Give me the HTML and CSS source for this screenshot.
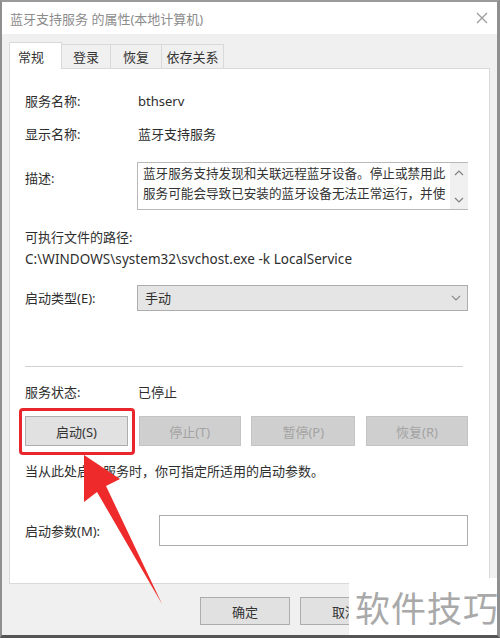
FILE: index.html
```html
<!DOCTYPE html>
<html lang="zh-CN">
<head>
<meta charset="utf-8">
<title>蓝牙支持服务 的属性</title>
<link rel="stylesheet" href="styles.css">
</head>
<body>
<div class="window">
  <div class="titlebar">
    <span class="title">蓝牙支持服务 的属性(本地计算机)</span>
    <svg class="close" width="12" height="12" viewBox="0 0 12 12"><path d="M1 1L11 11M11 1L1 11" stroke="#9a9a9a" stroke-width="1.2" fill="none"/></svg>
  </div>
  <div class="body">
    <div class="tabs">
      <div class="tab active t1">常规</div>
      <div class="tab t2">登录</div>
      <div class="tab t3">恢复</div>
      <div class="tab t4">依存关系</div>
    </div>
    <div class="panel">
      <div class="row r-name"><span class="label">服务名称:</span><span class="value">bthserv</span></div>
      <div class="row r-disp"><span class="label">显示名称:</span><span class="value">蓝牙支持服务</span></div>
      <div class="row r-desc">
        <span class="label desc-label">描述:</span>
        <div class="descbox">
          <div class="desctext">蓝牙服务支持发现和关联远程蓝牙设备。停止或禁用此<br>服务可能会导致已安装的蓝牙设备无法正常运行，并使</div>
          <div class="scroll">
            <svg width="10" height="8" viewBox="0 0 10 8"><path d="M1 6L5 2L9 6" stroke="#808080" stroke-width="1.2" fill="none"/></svg>
            <svg width="10" height="8" viewBox="0 0 10 8"><path d="M1 2L5 6L9 2" stroke="#808080" stroke-width="1.2" fill="none"/></svg>
          </div>
        </div>
      </div>
      <div class="row r-exe"><span class="label">可执行文件的路径:</span></div>
      <div class="row r-path"><span class="path">C:\WINDOWS\system32\svchost.exe -k LocalService</span></div>
      <div class="row r-type">
        <span class="label">启动类型(E):</span>
        <div class="select"><span>手动</span>
          <svg width="10" height="8" viewBox="0 0 10 8"><path d="M1 2L5 6L9 2" stroke="#8a8a8a" stroke-width="1.1" fill="none"/></svg>
        </div>
      </div>
      <div class="sep"></div>
      <div class="row r-status"><span class="label">服务状态:</span><span class="value">已停止</span></div>
      <div class="btnrow">
        <div class="btnwrap"><div class="btn">启动(S)</div><div class="highlight"></div></div>
        <div class="btn disabled">停止(T)</div>
        <div class="btn disabled w104">暂停(P)</div>
        <div class="btn disabled">恢复(R)</div>
      </div>
      <div class="row r-hint"><span class="cjk">当从此处启动服务时，你可指定所适用的启动参数。</span></div>
      <div class="row r-param"><span class="label">启动参数(M):</span><div class="input"></div></div>
    </div>
    <div class="footer">
      <div class="fbtn">确定</div>
      <div class="fbtn cancel">取消</div>
      <div class="fbtn">应用(A)</div>
    </div>
  </div>
  <svg class="arrow" width="500" height="638" viewBox="0 0 500 638">
    <polygon points="84,455 120,479 106,486 162,604 97,492 84,502" fill="#ee2a2a"/>
  </svg>
  <div class="watermark">软件技巧</div>
</div>
</body>
</html>
```

FILE: styles.css
```css
* { box-sizing: border-box; }
html, body { margin: 0; padding: 0; background: #ffffff; }
body {
  font-family: "Noto Sans", "Noto Sans CJK SC", sans-serif;
  font-size: 13px;
  color: #2e2e2e;
}
.cjk { font-family: "Noto Sans CJK SC", sans-serif; }
.window {
  position: relative;
  width: 500px;
  height: 638px;
  border-left: 2px solid #8f8f8f;
  border-right: 3px solid #8f8f8f;
  border-top: 2px solid #9a9a9a;
  border-bottom: 3px solid #555555;
  background: #f0f0f0;
  display: flex;
  flex-direction: column;
  overflow: hidden;
}
.titlebar {
  height: 32px;
  background: #ffffff;
  display: flex;
  align-items: center;
  justify-content: space-between;
  padding: 0 9px 0 8px;
  flex-shrink: 0;
}
.title { color: #8c8c8c; font-size: 13px; }
.close { display: block; }
.body {
  flex: 1;
  padding: 8px 7px 0 7px;
  display: flex;
  flex-direction: column;
}
.tabs {
  display: flex;
  align-items: flex-end;
  height: 26px;
  position: relative;
  z-index: 2;
}
.tab {
  height: 24px;
  border: 1px solid #d9d9d9;
  border-bottom: none;
  border-left: none;
  background: #f0f0f0;
  display: flex;
  align-items: center;
  justify-content: center;
  font-size: 13px;
  color: #333;
}
.tab.active {
  height: 27px;
  background: #ffffff;
  border-left: 1px solid #d9d9d9;
  margin-bottom: -1px;
  justify-content: flex-start;
  padding-left: 8px;
}
.t1 { width: 53px; }
.t2 { width: 49px; }
.t3 { width: 51px; }
.t4 { width: 62px; }
.panel {
  height: 516px;
  background: #ffffff;
  border: 1px solid #d9d9d9;
  padding: 22px 21px 0 15px;
  display: flex;
  flex-direction: column;
  position: relative;
  z-index: 1;
}
.row {
  display: flex;
  align-items: center;
  min-height: 20px;
  line-height: 20px;
}
.label { width: 113px; flex-shrink: 0; }
.r-disp { margin-top: 13px; }
.r-desc { margin-top: 18px; align-items: flex-start; }
.desc-label { margin-top: 6px; }
.descbox {
  flex: 1;
  height: 48px;
  border: 1px solid #b9b9b9;
  border-right: none;
  display: flex;
  margin-left: -1px;
}
.desctext {
  flex: 1;
  padding: 0 0 0 5px;
  line-height: 20px;
  font-size: 12.6px;
  white-space: nowrap;
  overflow: hidden;
  color: #333;
  font-family: "Noto Sans CJK SC", sans-serif;
}
.scroll {
  width: 18px;
  background: #f0f0f0;
  display: flex;
  flex-direction: column;
  justify-content: space-between;
  align-items: center;
  padding: 6px 0 5px;
}
.scroll svg { display: block; }
.r-exe { margin-top: 17px; }
.r-path { margin-top: 2px; }
.path { font-size: 13.5px; letter-spacing: 0.05px; }
.r-type { margin-top: 16px; }
.select {
  flex: 1;
  height: 26px;
  margin-left: -1px;
  background: #e5e5e5;
  border: 1px solid #adadad;
  display: flex;
  align-items: center;
  justify-content: space-between;
  padding: 0 6px 0 7px;
}
.select svg { display: block; }
.sep {
  margin-top: 55px;
  height: 1px;
  background: #d0d0d0;
  margin-right: 5px;
}
.r-status { margin-top: 15px; }
.btnrow {
  margin-top: 14px;
  display: flex;
  justify-content: space-between;
}
.btnwrap { position: relative; }
.btn {
  width: 102px;
  height: 30px;
  background: #e1e1e1;
  border: 1px solid #adadad;
  display: flex;
  align-items: center;
  justify-content: center;
  font-size: 13px;
  color: #333;
}
.btnwrap .btn { width: 103px; }
.btn.w104 { width: 104px; }
.btn.disabled {
  background: #cfcfcf;
  border-color: #c4c4c4;
  color: #a3a3a3;
}
.highlight {
  position: absolute;
  left: -6px;
  right: -7px;
  top: -8px;
  bottom: -9px;
  border: 3px solid #e8262b;
  border-radius: 4px;
}
.r-hint { margin-top: 15px; font-size: 13px; }
.r-param { margin-top: 34px; }
.r-param .label { width: 134px; }
.input {
  flex: 1;
  height: 31px;
  border: 1px solid #adadad;
  background: #fff;
}
.footer {
  margin-top: 13px;
  display: flex;
  justify-content: flex-end;
  gap: 10px;
  padding-right: 0;
}
.fbtn {
  width: 90px;
  height: 28px;
  background: #e1e1e1;
  border: 1px solid #adadad;
  display: flex;
  align-items: center;
  justify-content: center;
  font-size: 13px;
  color: #333;
}
.arrow {
  position: absolute;
  left: -2px;
  top: -2px;
  pointer-events: none;
  z-index: 5;
}
.watermark {
  position: absolute;
  left: 347px;
  top: 576px;
  width: 160px;
  height: 70px;
  background: #ffffff;
  color: #a9a9a9;
  font-family: "Noto Sans CJK SC", sans-serif;
  font-size: 35px;
  line-height: 58px;
  padding-left: 6px;
  z-index: 6;
  letter-spacing: 1px;
}
```
